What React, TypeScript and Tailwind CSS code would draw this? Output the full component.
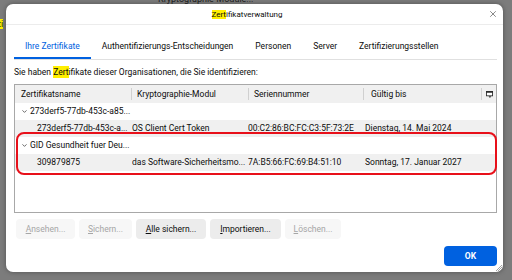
import React from "react";
import { X, ChevronDown } from "lucide-react";

const tabs = ["Ihre Zertifikate", "Authentifizierungs-Entscheidungen", "Personen", "Server", "Zertifizierungsstellen"];

const Hl = ({ children }: { children: React.ReactNode }) => (
  <span className="bg-[#ffef00]">{children}</span>
);

const Cell = ({ w, children, cls = "" }: { w: string; children?: React.ReactNode; cls?: string }) => (
  <div className={`${w} shrink-0 whitespace-nowrap overflow-hidden ${cls}`}>{children}</div>
);

const GroupRow = ({ label }: { label: string }) => (
  <div className="h-[17px] flex items-center bg-white">
    <ChevronDown className="w-[7px] h-[7px] ml-[6px] mr-[2px] text-[#333]" strokeWidth={2.5} />
    <span className="whitespace-nowrap">{label}</span>
  </div>
);

const CertRow = ({ name, module, serial, valid }: { name: string; module: string; serial: string; valid: string }) => (
  <div className="h-[17px] flex items-center bg-[#f0f0f0]">
    <Cell w="w-[117px]" cls="pl-[22px]">{name}</Cell>
    <Cell w="w-[116px]">{module}</Cell>
    <Cell w="w-[117px]">{serial}</Cell>
    <Cell w="w-[118px]">{valid}</Cell>
  </div>
);

const Btn = ({ w, k, rest, disabled }: { w: string; k: string; rest: string; disabled?: boolean }) => (
  <button
    className={`${w} h-[20px] rounded-[4px] ${disabled ? "bg-[#f7f7f7] text-[#a6a6a6]" : "bg-[#ececec] text-[#0c0c0c]"}`}
  >
    <span className="underline underline-offset-[1px]">{k}</span>
    {rest}
  </button>
);

export default function App() {
  return (
    <div className="w-[512px] h-[280px] bg-[#7c7c7c] relative overflow-hidden pl-[6px] pt-[4px] text-[8.5px] text-[#0c0c0c] font-['Roboto',sans-serif]">
      {/* window behind */}
      <div className="absolute left-[158px] top-[-7px] text-[9px] text-[#1e1e1e]">Kryptographie-Module...</div>
      <div className="absolute left-[-2px] top-[18px] text-[9px] text-[#1e1e1e]"><Hl>ti</Hl></div>

      <div className="relative w-[497px] h-[268px] bg-white rounded-[7px] shadow-[0_0_5px_rgba(0,0,0,0.35)] flex flex-col">
        {/* Title bar */}
        <div className="h-[21px] border-b border-[#ececec] flex items-center shrink-0">
          <div className="flex-1 text-center pt-[1px] text-[8px]">
            <Hl>Zert</Hl>ifikatverwaltung
          </div>
          <X className="w-[10px] h-[10px] mr-[5px] text-[#333]" strokeWidth={1.4} />
        </div>

        <div className="pl-[8px] pr-[6px] flex flex-col flex-1">
          {/* Tabs */}
          <div className="mt-[10px] flex border-b border-[#e0e0e0]">
            {tabs.map((t, i) => (
              <div
                key={t}
                className={`h-[24px] px-[11px] flex items-center pt-[1px] border-b-2 whitespace-nowrap ${i === 0 ? "border-[#0061e0] text-[#0061e0]" : "border-transparent"}`}
              >
                {t}
              </div>
            ))}
          </div>

          <div className="mt-[5px] h-[14px] flex items-center whitespace-nowrap">
            Sie haben&nbsp;<Hl>Zert</Hl>ifikate dieser Organisationen, die Sie identifizieren:
          </div>

          {/* Table */}
          <div className="mt-[5px] h-[129px] border border-[#a8a8a8] flex flex-col">
            <div className="h-[18px] bg-[#f0f0f0] flex items-center shrink-0">
              <Cell w="w-[117px]" cls="pl-[6px] border-r border-[#d0d0d0]">Zertifikatsname</Cell>
              <Cell w="w-[117px]" cls="pl-[5px] border-r border-[#d0d0d0]">Kryptographie-Modul</Cell>
              <Cell w="w-[115px]" cls="pl-[5px] border-r border-[#d0d0d0]">Seriennummer</Cell>
              <Cell w="w-[118px]" cls="pl-[7px] border-r border-[#d0d0d0]">Gültig bis</Cell>
              <div className="flex-1 flex justify-center">
                <svg width="7" height="7" viewBox="0 0 8 8">
                  <rect x="0" y="0" width="8" height="6" fill="#2a2a2a" />
                  <rect x="1" y="2" width="6" height="3" fill="#fff" />
                  <path d="M3 6 L6 6 L4.5 8 Z" fill="#2a2a2a" />
                </svg>
              </div>
            </div>
            <GroupRow label="273derf5-77db-453c-a85..." />
            <CertRow name="273derf5-77db-453c-a..." module="OS Client Cert Token" serial="00:C2:86:BC:FC:C3:5F:73:2E" valid="Dienstag, 14. Mai 2024" />
            <div className="relative">
              <GroupRow label="GID Gesundheit fuer Deu..." />
              <CertRow name="309879875" module="das Software-Sicherheitsmo..." serial="7A:B5:66:FC:69:B4:51:10" valid="Sonntag, 17. Januar 2027" />
              <div className="absolute left-[1px] right-[-1px] top-[-5px] bottom-[-4px] border-2 border-[#e8101a] rounded-[8px]" />
            </div>
          </div>

          {/* Buttons */}
          <div className="mt-[6px] flex gap-[4px] pl-[2px]">
            <Btn w="w-[59px]" k="A" rest="nsehen..." disabled />
            <Btn w="w-[53px]" k="S" rest="ichern..." disabled />
            <Btn w="w-[70px]" k="A" rest="lle sichern..." />
            <Btn w="w-[71px]" k="I" rest="mportieren..." />
            <Btn w="w-[56px]" k="L" rest="öschen..." disabled />
          </div>

          <div className="mt-[7px] flex justify-end">
            <button className="w-[53px] h-[20px] rounded-[4px] bg-[#0061e0] text-white font-bold">OK</button>
          </div>
        </div>

        {/* resize grip */}
        <svg className="absolute right-[1px] bottom-[1px]" width="7" height="7" viewBox="0 0 7 7">
          <path d="M7 1 L1 7 M7 3 L3 7 M7 5 L5 7" stroke="#8a8a8a" strokeWidth="0.8" />
        </svg>
      </div>
    </div>
  );
}
